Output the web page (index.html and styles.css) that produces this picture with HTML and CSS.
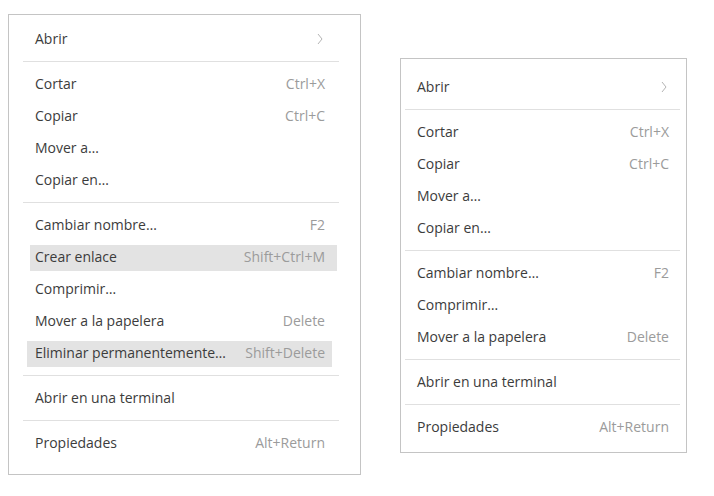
FILE: index.html
```html
<!DOCTYPE html>
<html lang="es">
<head>
<meta charset="utf-8">
<title>Menús</title>
<link rel="stylesheet" href="styles.css">
</head>
<body>
<div class="canvas">
  <div class="menu menu-a">
    <div class="item"><span class="label">Abrir</span><svg class="chev" width="6" height="12" viewBox="0 0 6 12"><polyline points="1,1 5,6 1,11" fill="none" stroke="#b4b4b4" stroke-width="1"/></svg></div>
    <div class="sep"></div>
    <div class="item"><span class="label">Cortar</span><span class="key">Ctrl+X</span></div>
    <div class="item"><span class="label">Copiar</span><span class="key">Ctrl+C</span></div>
    <div class="item"><span class="label">Mover a…</span></div>
    <div class="item"><span class="label">Copiar en…</span></div>
    <div class="sep"></div>
    <div class="item"><span class="label">Cambiar nombre…</span><span class="key">F2</span></div>
    <div class="item hl hl-1"><span class="label">Crear enlace</span><span class="key">Shift+Ctrl+M</span></div>
    <div class="item"><span class="label">Comprimir…</span></div>
    <div class="item"><span class="label">Mover a la papelera</span><span class="key">Delete</span></div>
    <div class="item hl hl-2"><span class="label">Eliminar permanentemente…</span><span class="key">Shift+Delete</span></div>
    <div class="sep"></div>
    <div class="item"><span class="label">Abrir en una terminal</span></div>
    <div class="sep"></div>
    <div class="item"><span class="label">Propiedades</span><span class="key">Alt+Return</span></div>
  </div>
  <div class="menu menu-b">
    <div class="item"><span class="label">Abrir</span><svg class="chev" width="6" height="12" viewBox="0 0 6 12"><polyline points="1,1 5,6 1,11" fill="none" stroke="#b4b4b4" stroke-width="1"/></svg></div>
    <div class="sep"></div>
    <div class="item"><span class="label">Cortar</span><span class="key">Ctrl+X</span></div>
    <div class="item"><span class="label">Copiar</span><span class="key">Ctrl+C</span></div>
    <div class="item"><span class="label">Mover a…</span></div>
    <div class="item"><span class="label">Copiar en…</span></div>
    <div class="sep"></div>
    <div class="item"><span class="label">Cambiar nombre…</span><span class="key">F2</span></div>
    <div class="item"><span class="label">Comprimir…</span></div>
    <div class="item"><span class="label">Mover a la papelera</span><span class="key">Delete</span></div>
    <div class="sep"></div>
    <div class="item"><span class="label">Abrir en una terminal</span></div>
    <div class="sep"></div>
    <div class="item"><span class="label">Propiedades</span><span class="key">Alt+Return</span></div>
  </div>
</div>
</body>
</html>
```
FILE: styles.css
```css
* { box-sizing: border-box; }
html, body {
  margin: 0;
  padding: 0;
  background: #ffffff;
}
body {
  font-family: "Open Sans", "Noto Sans", sans-serif;
  font-size: 14px;
  color: #3c3c3c;
}
.canvas {
  display: flex;
  align-items: flex-start;
  padding: 14px 0 0 8px;
  gap: 39px;
}
.menu {
  background: #ffffff;
  border: 1px solid #c4c4c4;
  display: flex;
  flex-direction: column;
}
.menu-a {
  width: 353px;
  padding: 8px 21px 15px 14px;
}
.menu-b {
  width: 287px;
  margin-top: 44px;
  padding: 12px 6px 9px 4px;
}
.item {
  height: 32px;
  line-height: 32px;
  display: flex;
  align-items: center;
  justify-content: space-between;
  padding: 0 14px 0 12px;
  white-space: nowrap;
}
.menu-b .item {
  padding: 0 11px 0 12px;
}
.label { color: #3c3c3c; }
.key { color: #9b9b9b; }
.chev { display: block; margin-right: 2px; }
.sep {
  height: 1px;
  margin: 6px 0;
  background: #e0e0e0;
}
.hl {
  background: #e3e3e3;
  height: 26px;
  line-height: 24px;
  margin-top: 4px;
  margin-bottom: 2px;
  padding-bottom: 2px;
}
.hl-1 {
  margin-left: 7px;
  margin-right: 2px;
  padding-left: 5px;
  padding-right: 12px;
}
.hl-2 {
  margin-left: 4px;
  margin-right: 7px;
  padding-left: 8px;
  padding-right: 7px;
}
```
